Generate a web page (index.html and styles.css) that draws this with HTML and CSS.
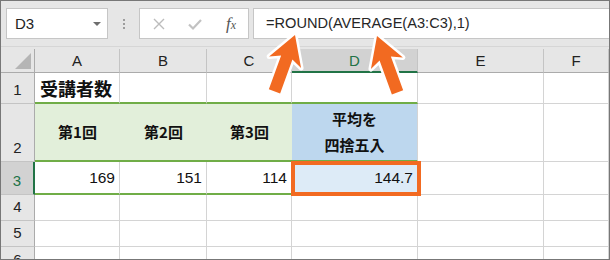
FILE: index.html
```html
<!DOCTYPE html>
<html lang="ja">
  <head>
    <meta charset="UTF-8" />
    <title>ROUND</title>
    <link rel="stylesheet" href="styles.css">
  </head>
  <body>
    <div class="frame">
      <div class="toolbar">
        <div class="namebox">
          <span>D3</span>
          <span class="caret"></span>
        </div>
        <div class="grip"><i></i><i></i><i></i></div>
        <div class="buttons">
          <svg class="btn" width="14" height="14" viewBox="0 0 14 14">
            <path d="M2 2 L12 12 M12 2 L2 12" stroke="#bcbcbc" stroke-width="1.4" fill="none" />
          </svg>
          <svg class="btn" width="14" height="14" viewBox="0 0 14 14">
            <path d="M1 7.5 L5 11.5 L13 3" stroke="#c2c2c2" stroke-width="2.2" fill="none" />
          </svg>
          <span class="fx">f<sub>x</sub></span>
        </div>
        <div class="formula">=ROUND(AVERAGE(A3:C3),1)</div>
      </div>

      <div class="sheet">
        <div class="corner"></div>
        <div class="colhead">A</div>
        <div class="colhead">B</div>
        <div class="colhead">C</div>
        <div class="colhead active">D</div>
        <div class="colhead">E</div>
        <div class="colhead">F</div>

        <div class="rowhead">1</div>
        <div class="cell title top">受講者数</div>
        <div class="cell top"></div>
        <div class="cell top"></div>
        <div class="cell top"></div>
        <div class="cell"></div>
        <div class="cell"></div>

        <div class="rowhead">2</div>
        <div class="cell band">第1回</div>
        <div class="cell band">第2回</div>
        <div class="cell band">第3回</div>
        <div class="cell band blue">平均を<br>四捨五入</div>
        <div class="cell"></div>
        <div class="cell"></div>

        <div class="rowhead active">3</div>
        <div class="cell num under">169</div>
        <div class="cell num under">151</div>
        <div class="cell num under">114</div>
        <div class="cell num picked">144.7</div>
        <div class="cell"></div>
        <div class="cell"></div>

        <div class="rowhead">4</div>
        <div class="cell"></div>
        <div class="cell"></div>
        <div class="cell"></div>
        <div class="cell"></div>
        <div class="cell"></div>
        <div class="cell"></div>

        <div class="rowhead">5</div>
        <div class="cell"></div>
        <div class="cell"></div>
        <div class="cell"></div>
        <div class="cell"></div>
        <div class="cell"></div>
        <div class="cell"></div>

        <div class="rowhead">6</div>
        <div class="cell"></div>
        <div class="cell"></div>
        <div class="cell"></div>
        <div class="cell"></div>
        <div class="cell"></div>
        <div class="cell"></div>
      </div>

      <!-- callout arrows over the formula -->
      <svg class="arrows" width="610" height="260">
        <polygon class="arrow" transform="translate(295 35) rotate(20)"
          points="0,0 17,29 6,24 6,60 -6,60 -6,24 -17,29" />
        <polygon class="arrow" transform="translate(377 36) rotate(-20)"
          points="0,0 17,29 6,24 6,60 -6,60 -6,24 -17,29" />
      </svg>
    </div>
  </body>
</html>
```

FILE: styles.css
```css
* {
  box-sizing: border-box;
}

body {
  margin: 0;
  font-family: "Liberation Sans", "Noto Sans CJK JP", sans-serif;
  color: #222;
}

.frame {
  position: relative;
  width: 610px;
  height: 260px;
  border: 1px solid #777;
  background: #e6e6e6;
  overflow: hidden;
}

.toolbar {
  display: flex;
  align-items: center;
  height: 46px;
  padding-left: 5px;
  border-bottom: 1px solid #d6d6d6;
}

.namebox {
  display: flex;
  align-items: center;
  justify-content: space-between;
  width: 102px;
  height: 31px;
  padding: 0 6px 0 8px;
  background: #fff;
  border: 1px solid #c6c6c6;
  font-size: 15px;
}

.caret {
  width: 0;
  height: 0;
  border-left: 4px solid transparent;
  border-right: 4px solid transparent;
  border-top: 4px solid #6e6e6e;
}

.grip {
  display: flex;
  flex-direction: column;
  gap: 2px;
  width: 31px;
  align-items: center;
}

.grip i {
  width: 2px;
  height: 2px;
  background: #9d9d9d;
}

.buttons {
  display: flex;
  align-items: center;
  width: 110px;
  height: 31px;
  padding-left: 12px;
  gap: 22px;
  background: #fff;
  border: 1px solid #c6c6c6;
}

.fx {
  font-family: "Liberation Serif", serif;
  font-style: italic;
  font-size: 17px;
  color: #555;
  margin-left: 2px;
}

.fx sub {
  font-size: 12px;
  vertical-align: 0;
}

.formula {
  flex: 1;
  height: 31px;
  margin-left: 4px;
  padding-left: 12px;
  line-height: 29px;
  background: #fff;
  border: 1px solid #c6c6c6;
  border-right: 0;
  font-size: 14.6px;
  color: #262626;
}

.sheet {
  display: grid;
  grid-template-columns: 34px 85px 87px 85px 126px 126px 1fr;
  grid-template-rows: 24px 31px 58px 33px 26px 26px 1fr;
  height: 211px;
  margin-top: 2px;
  background: #fff;
}

.corner {
  position: relative;
  background: #e6e6e6;
  border-right: 1px solid #ababab;
  border-bottom: 1px solid #ababab;
}

.corner::after {
  content: "";
  position: absolute;
  right: 3px;
  bottom: 3px;
  border-left: 16px solid transparent;
  border-bottom: 16px solid #b5b5b5;
}

.colhead {
  display: flex;
  align-items: center;
  justify-content: center;
  background: #e6e6e6;
  border-right: 1px solid #c4c4c4;
  border-bottom: 1px solid #ababab;
  font-size: 15px;
}

.colhead.active {
  background: #d2d2d2;
  color: #217346;
  border-bottom: 2px solid #217346;
}

.rowhead {
  display: flex;
  align-items: flex-end;
  justify-content: center;
  line-height: 26px;
  background: #e6e6e6;
  border-right: 1px solid #ababab;
  border-bottom: 1px solid #c4c4c4;
  font-size: 15px;
}

.rowhead.active {
  background: #d2d2d2;
  color: #217346;
  border-right: 2px solid #217346;
}

.cell {
  display: flex;
  align-items: center;
  border-right: 1px solid #d4d4d4;
  border-bottom: 1px solid #d4d4d4;
}

.title {
  padding-left: 5px;
  font-family: "Noto Sans CJK JP", sans-serif;
  font-size: 18px;
  font-weight: 700;
  color: #111;
}

.top {
  border-bottom: 2px solid #70ad47;
}

.band {
  justify-content: center;
  text-align: center;
  background: #e2efda;
  border-right: 0;
  border-bottom: 2px solid #70ad47;
  font-family: "Noto Sans CJK JP", sans-serif;
  font-size: 15px;
  font-weight: 700;
  line-height: 26px;
  color: #111;
}

.band.blue {
  background: #bdd7ee;
  border-right: 1px solid #d4d4d4;
}

.num {
  justify-content: flex-end;
  padding-right: 4px;
  font-size: 15.5px;
  color: #111;
}

.under {
  border-bottom: 2px solid #70ad47;
}

.picked {
  position: relative;
  background: #ddebf7;
}

.picked::after {
  content: "";
  position: absolute;
  top: -1px;
  left: -1px;
  right: -4px;
  bottom: -2px;
  border: 4px solid #f26a21;
}

.arrows {
  position: absolute;
  top: -1px;
  left: -1px;
  pointer-events: none;
}

.arrow {
  fill: #f26a21;
  stroke: #fff;
  stroke-width: 5;
  stroke-linejoin: round;
  paint-order: stroke;
}
```
